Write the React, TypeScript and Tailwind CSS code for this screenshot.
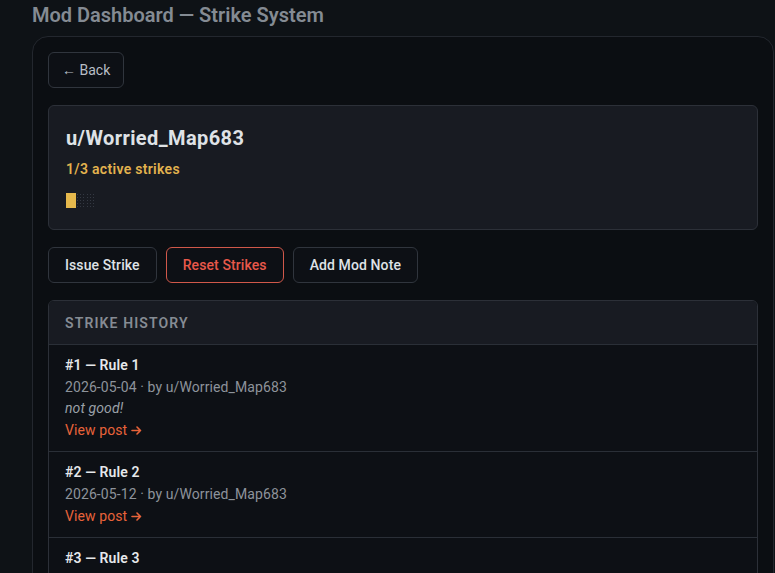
import React from "react";

interface Strike {
  id: number;
  rule: string;
  date: string;
  by: string;
  note?: string;
}

const strikes: Strike[] = [
  { id: 1, rule: "Rule 1", date: "2026-05-04", by: "u/Worried_Map683", note: "not good!" },
  { id: 2, rule: "Rule 2", date: "2026-05-12", by: "u/Worried_Map683" },
  { id: 3, rule: "Rule 3", date: "2026-05-20", by: "u/Worried_Map683" },
];

const Arrow = () => (
  <svg width="11" height="9" viewBox="0 0 11 9" className="inline-block ml-[4px] mb-[1px]" fill="none" stroke="currentColor" strokeWidth="1.6" strokeLinecap="round" strokeLinejoin="round">
    <path d="M1 4.5h8.5M6 1l3.5 3.5L6 8" />
  </svg>
);

const StrikeRow: React.FC<{ strike: Strike }> = ({ strike }) => (
  <div className="border-t border-[#2a2f37] bg-[#0d1015] px-4 py-[10px] text-sm leading-[21.6px] tracking-[0.1px]">
    <div className="font-semibold text-[#e6e8eb]">
      #{strike.id} — {strike.rule}
    </div>
    <div className="text-[#8d939b]">
      {strike.date} · by {strike.by}
    </div>
    {strike.note && <div className="italic text-[#9aa0a8]">{strike.note}</div>}
    <a className="text-[#e8633a]">
      View post
      <Arrow />
    </a>
  </div>
);

export default function App() {
  const active = 1;
  const max = 3;

  return (
    <div
      className="min-h-screen bg-[#0e1216] pl-8 pt-[2px]"
      style={{ fontFamily: "Roboto, 'Liberation Sans', sans-serif" }}
    >
      <h1 className="text-[20px] leading-[26px] font-semibold text-[#848b93] mb-[8px]">
        Mod Dashboard — Strike System
      </h1>

      <div className="w-[742px] rounded-[16px] border border-[#23272e] bg-[#0b0e12] p-[15px] pb-10">
        <button className="h-[36px] rounded-md border border-[#30353d] bg-[#0d1015] px-[13px] text-sm text-[#b8bec6]">
          ← Back
        </button>

        <div className="mt-[17px] rounded-md border border-[#2c3038] bg-[#181b22] px-[17px] pt-[18px] pb-[21px]">
          <div className="text-[20px] leading-[28px] font-bold tracking-[0.4px] text-[#dfe2e6]">u/Worried_Map683</div>
          <div className="mt-[7px] text-sm font-semibold tracking-[0.3px] text-[#e2b24e]">
            {active}/{max} active strikes
          </div>
          <div className="mt-[14px] flex">
            {Array.from({ length: max }).map((_, i) => (
              <span
                key={i}
                className={`h-[15px] w-[10px] ${i < active ? "bg-[#e5b84c]" : "bg-[radial-gradient(#343943_1px,transparent_1px)] bg-[length:3px_3px]"}`}
              />
            ))}
          </div>
        </div>

        <div className="mt-[17px] flex gap-[9px]">
          <button className="h-[36px] rounded-md border border-[#30353d] bg-[#0d1015] px-4 text-sm font-medium tracking-[0.1px] text-[#dfe2e6]">
            Issue Strike
          </button>
          <button className="h-[36px] rounded-md border border-[#d0584a] bg-[#0d1015] px-4 text-sm font-medium tracking-[0.1px] text-[#e8584a]">
            Reset Strikes
          </button>
          <button className="h-[36px] rounded-md border border-[#30353d] bg-[#0d1015] px-4 text-sm font-medium tracking-[0.1px] text-[#dfe2e6]">
            Add Mod Note
          </button>
        </div>

        <div className="mt-[17px] overflow-hidden rounded-md border border-[#2c3038]">
          <div className="bg-[#181b22] px-4 h-[43px] flex items-center text-sm font-semibold tracking-[0.08em] text-[#868c94]">
            STRIKE HISTORY
          </div>
          {strikes.map((s) => (
            <StrikeRow key={s.id} strike={s} />
          ))}
        </div>
      </div>
    </div>
  );
}
